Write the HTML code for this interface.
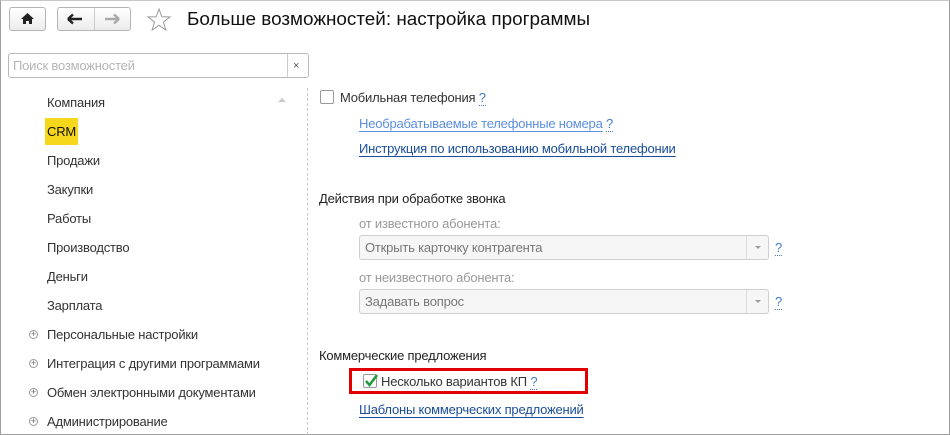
<!DOCTYPE html>
<html><head><meta charset="utf-8"><style>
*{box-sizing:border-box;margin:0;padding:0}
body{width:950px;height:435px;background:#fff;font-family:"Liberation Sans",Arial,sans-serif;font-size:13px;letter-spacing:-0.2px;color:#333;position:relative;overflow:hidden}
.frame{position:absolute;left:0;top:0;width:950px;height:435px;border:1px solid #a0a0a0;border-top-color:#c8c8c8}
.a{position:absolute;white-space:nowrap;line-height:16px}
.btn{position:absolute;border:1px solid #b5b5b5;border-radius:3px;background:linear-gradient(#fff,#ececec)}
.link{color:#1a4d99;text-decoration:underline;text-underline-offset:3px}
.q{color:#3f7ccc;border-bottom:1px dotted #3f7ccc;line-height:13px}
.sel{position:absolute;left:359px;width:410px;height:25px;border:1px solid #cfcfcf;border-radius:3px;background:#f6f6f6;color:#777;padding:4px 0 0 5px}
.sel .dd{position:absolute;right:0;top:0;width:22px;height:23px;border-left:1px solid #dedede}
.sel .dd:after{content:"";position:absolute;left:8px;top:10px;border:3px solid transparent;border-top:3px solid #999}
.plus{position:absolute;left:29px;width:9px;height:9px;border:1px solid #999;border-radius:50%;font-size:9px;line-height:7px;text-align:center;color:#666;letter-spacing:0}
</style></head><body>
<div class="frame"></div>
<div class="btn" style="left:9px;top:7px;width:37px;height:24px"><svg width="37" height="24" style="position:absolute;left:-1px;top:-1px"><path d="M12 12 L18.5 6 L25 12 H23 V17 H20 V14 H17 V17 H14 V12Z" fill="#222"/></svg></div>
<div class="btn" style="left:57px;top:7px;width:74px;height:24px"><div style="position:absolute;left:36px;top:0;width:1px;height:22px;background:#ccc"></div>
<svg width="74" height="24" style="position:absolute;left:-1px;top:-1px"><path d="M11 12H25M11 12L16 7.5M11 12L16 16.5" stroke="#222" stroke-width="2.5" fill="none"/><path d="M62 12H48M62 12L57 7.5M62 12L57 16.5" stroke="#aaa" stroke-width="2.5" fill="none"/></svg></div>
<svg width="26" height="26" style="position:absolute;left:146px;top:7px"><path d="M13 2 L15.8 9.8 L24 10 L17.5 15 L19.8 23 L13 18.3 L6.2 23 L8.5 15 L2 10 L10.2 9.8Z" fill="none" stroke="#999" stroke-width="1"/></svg>
<div class="a" style="left:187px;top:9px;font-size:18.9px;line-height:22px;color:#111;letter-spacing:0">Больше возможностей: настройка программы</div>
<div style="position:absolute;left:8px;top:53px;width:301px;height:25px;border:1px solid #b8b8b8;border-radius:3px"></div>
<div style="position:absolute;left:287px;top:54px;width:1px;height:23px;background:#ccc"></div>
<div class="a" style="left:293px;top:58px;font-size:11px;color:#555">×</div>
<div class="a" style="left:13px;top:58px;color:#b5b5b5">Поиск возможностей</div>
<div style="position:absolute;left:307px;top:88px;height:347px;border-left:1px dashed #c8c8c8"></div>
<div style="position:absolute;left:278px;top:98px;border:4px solid transparent;border-bottom:4px solid #c8c8c8;border-top:0"></div>
<div style="position:absolute;left:45px;top:118px;width:33px;height:27px;background:#f7d71c"></div>
<div class="a" style="left:47px;top:95px">Компания</div>
<div class="a" style="left:47px;top:124px;color:#111">CRM</div>
<div class="a" style="left:47px;top:153px">Продажи</div>
<div class="a" style="left:47px;top:182px">Закупки</div>
<div class="a" style="left:47px;top:211px">Работы</div>
<div class="a" style="left:47px;top:240px">Производство</div>
<div class="a" style="left:47px;top:269px">Деньги</div>
<div class="a" style="left:47px;top:298px">Зарплата</div>
<div class="plus" style="top:330px">+</div><div class="a" style="left:47px;top:327px">Персональные настройки</div>
<div class="plus" style="top:359px">+</div><div class="a" style="left:47px;top:356px">Интеграция с другими программами</div>
<div class="plus" style="top:388px">+</div><div class="a" style="left:47px;top:385px">Обмен электронными документами</div>
<div class="plus" style="top:417px">+</div><div class="a" style="left:47px;top:414px">Администрирование</div>

<div style="position:absolute;left:320px;top:90px;width:14px;height:14px;border:1px solid #999;border-radius:2px"></div>
<div class="a" style="left:340px;top:90px">Мобильная телефония <span class="q">?</span></div>
<div class="a" style="left:359px;top:116px"><span class="link" style="color:#5a8ee0">Необрабатываемые телефонные номера</span> <span class="q">?</span></div>
<div class="a" style="left:359px;top:141px"><span class="link">Инструкция по использованию мобильной телефонии</span></div>
<div class="a" style="left:319px;top:191px;color:#222">Действия при обработке звонка</div>
<div class="a" style="left:359px;top:216px;color:#999">от известного абонента:</div>
<div class="sel" style="top:235px">Открыть карточку контрагента<div class="dd"></div></div>
<div class="a" style="left:775px;top:240px"><span class="q">?</span></div>
<div class="a" style="left:359px;top:270px;color:#999">от неизвестного абонента:</div>
<div class="sel" style="top:289px">Задавать вопрос<div class="dd"></div></div>
<div class="a" style="left:775px;top:294px"><span class="q">?</span></div>
<div class="a" style="left:319px;top:348px;color:#222">Коммерческие предложения</div>
<div style="position:absolute;left:349px;top:368px;width:239px;height:26px;border:3px solid #e00000"></div>
<div style="position:absolute;left:363px;top:374px;width:14px;height:14px;border:1px solid #999;border-radius:2px"></div>
<svg width="16" height="16" style="position:absolute;left:363px;top:372px"><path d="M3 9 L6.5 13 L14 3" stroke="#1e9a3a" stroke-width="2.5" fill="none"/></svg>
<div class="a" style="left:381px;top:374px">Несколько вариантов КП <span class="q">?</span></div>
<div class="a" style="left:359px;top:402px"><span class="link">Шаблоны коммерческих предложений</span></div>
</body></html>
